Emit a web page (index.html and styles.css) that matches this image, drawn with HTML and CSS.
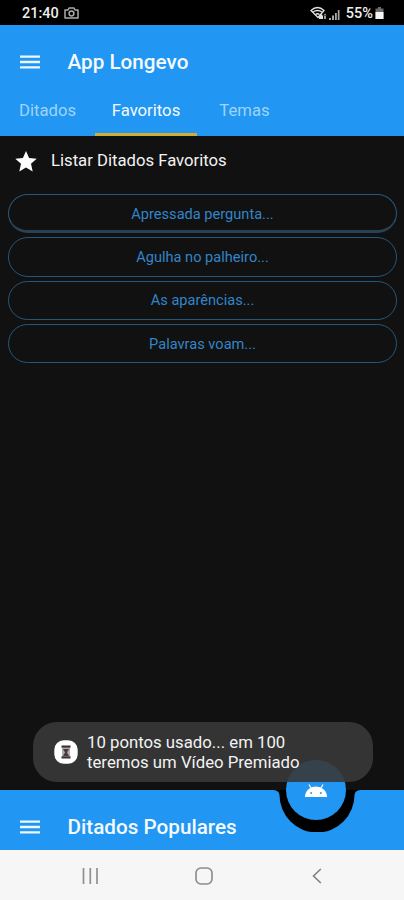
FILE: index.html
```html
<!DOCTYPE html>
<html lang="pt-BR">
<head>
<meta charset="utf-8">
<meta name="viewport" content="width=device-width">
<title>App Longevo</title>
<link rel="stylesheet" href="styles.css">
</head>
<body>
<div class="phone">
  <div class="status">
    <span class="clock">21:40</span>
    <svg class="camera" width="15" height="12" viewBox="0 0 15 12"><path d="M1 3h3l1-2h5l1 2h3v8H1z" fill="none" stroke="#aaa" stroke-width="1.5" stroke-linejoin="round"/><circle cx="7.5" cy="6.5" r="2.4" fill="none" stroke="#aaa" stroke-width="1.5"/></svg>
    <svg class="signal" width="31" height="15" viewBox="0 0 31 15"><g fill="none" stroke="#e2e2e2" stroke-width="1.3"><path d="M1 4.500Q7.500-1.500 14 4.500L8 11.500z"/><path d="M3 6q4.500-3 9 0M5.500 8.500q2-1.500 4 0"/></g><path d="M9 10l2-2.500L13 10v3H9zM13.500 10h3l-1.500-2.500zM14.300 9h1.400v4h-1.400z" fill="#e2e2e2"/><path d="M19 12h2v2h-2zM22 9.500h2V14h-2zM25 7h1.800v7H25zM27.800 4h1.700v10h-1.700z" fill="#a5a5a5"/></svg>
    <span class="percent">55%</span>
    <svg class="battery" width="9" height="12" viewBox="0 0 9 12"><path d="M3 0h3v1.500h2.500V12h-8V1.500H3z" fill="#6b6b6b"/><path d="M.5 5h8v7h-8z" fill="#f5f5f5"/></svg>
  </div>
  <header class="header">
    <div class="title-row">
      <svg class="menu" width="20" height="14" viewBox="0 0 20 14"><path d="M0 1.700h20M0 7h20M0 12.300h20" stroke="#eef8ff" stroke-width="2.300"/></svg>
      <h1 class="title">App Longevo</h1>
    </div>
    <nav class="tabs">
      <a class="tab tab-first">Ditados</a>
      <a class="tab tab-active">Favoritos</a>
      <a class="tab tab-last">Temas</a>
    </nav>
  </header>
  <main class="content">
    <div class="list-head">
      <svg width="22" height="21" viewBox="0 0 22 21"><path d="M11 0l3.100 7.100 7.600.7-5.700 5 1.700 7.600L11 16.400l-6.700 4L6 12.800l-5.700-5 7.600-.7z" fill="#fff"/></svg>
      <h2 class="list-title">Listar Ditados Favoritos</h2>
    </div>
    <div class="list">
      <button class="pill pill-first">Apressada pergunta...</button>
      <button class="pill">Agulha no palheiro...</button>
      <button class="pill">As aparências...</button>
      <button class="pill">Palavras voam...</button>
    </div>
  </main>
  <footer class="bottom">
    <svg class="notch" width="110" height="42" viewBox="0 0 110 42"><path d="M10 0h90c-4 0-7 1-7.500 5a37.500 37.500 0 0 1-75 0C17 1 14 0 10 0z" fill="#000"/></svg>
    <svg class="menu" width="20" height="14" viewBox="0 0 20 14"><path d="M0 1.700h20M0 7h20M0 12.300h20" stroke="#eef8ff" stroke-width="2.300"/></svg>
    <span class="title bottom-title">Ditados Populares</span>
    <div class="fab">
      <svg width="22" height="13" viewBox="0 0 22 13"><path d="M0 13a11 10.500 0 0 1 22 0z" fill="#fff"/><path d="M6.500 5L4 .5M15.500 5L18 .5" stroke="#fff" stroke-width="1.200"/><circle cx="6.200" cy="9" r="1" fill="#2196f3"/><circle cx="15.800" cy="9" r="1" fill="#2196f3"/></svg>
    </div>
  </footer>
  <div class="sysnav">
    <svg width="17" height="16" viewBox="0 0 17 16"><path d="M1.500 0v16M8.300 0v16M15 0v16" stroke="#909090" stroke-width="1.700"/></svg>
    <svg width="18" height="18" viewBox="0 0 18 18"><rect x="1" y="1" width="16" height="16" rx="5" fill="none" stroke="#898989" stroke-width="1.600"/></svg>
    <svg width="10" height="16" viewBox="0 0 10 16"><path d="M8.800 1L1.500 8l7.300 7" fill="none" stroke="#808080" stroke-width="1.600"/></svg>
  </div>
  <div class="toast">
    <svg width="24" height="24" viewBox="0 0 24 24"><rect x=".3" y=".3" width="23.400" height="23.400" rx="9.500" fill="#fff"/><path d="M7.500 5.500h9v2.300h-9zM7.500 16.200h9v2.300h-9z" fill="#333"/><path d="M8 8h8v8H8z" fill="#b4aaa5"/><path d="M9 9h6l-2 3.500 2 3.500H9l2-3.500z" fill="#4a3d39"/></svg>
    <p class="toast-text"><span class="line line-one">10 pontos usado... em 100</span><span class="line">teremos um Vídeo Premiado</span></p>
  </div>
</div>
</body>
</html>
```
FILE: styles.css
```css
* { box-sizing: border-box; }
body {
  margin: 0;
  background: #111;
  font-family: Roboto, "Liberation Sans", sans-serif;
}
.phone {
  position: relative;
  width: 404px;
  height: 900px;
  display: flex;
  flex-direction: column;
  overflow: hidden;
  background: #111;
}
svg { display: block; flex: none; }
.status {
  height: 25px;
  flex: none;
  display: flex;
  align-items: center;
  padding: 1px 20px 0 22px;
  background: #000;
  color: #eee;
  font-size: 14.500px;
  font-weight: 500;
}
.camera { margin-left: 5px; }
.signal { margin-left: auto; }
.percent { margin-left: 5px; font-size: 14.500px; }
.battery { margin-left: 2px; }
.header {
  height: 111px;
  flex: none;
  display: flex;
  flex-direction: column;
  background: #2196f3;
}
.title-row {
  height: 60px;
  display: flex;
  align-items: center;
  padding: 14px 0 0 20px;
}
.title {
  margin: 0 0 0 27.500px;
  font-size: 20.700px;
  line-height: 24px;
  font-weight: 500;
  color: #f4faff;
  white-space: nowrap;
}
.tabs {
  flex: 1;
  display: flex;
}
.tab {
  display: flex;
  justify-content: center;
  padding-top: 16px;
  font-size: 16.700px;
  line-height: 20px;
  color: #9fd4fb;
}
.tab-first { width: 95px; }
.tab-active {
  width: 102px;
  color: #f4faff;
  border-bottom: 3px solid #d1ad35;
}
.tab-last { width: 95px; }
.content { flex: 1; }
.list-head {
  height: 50px;
  display: flex;
  align-items: center;
  gap: 14px;
  padding-left: 15px;
}
.list-title {
  margin: 0;
  font-size: 16.700px;
  line-height: 20px;
  font-weight: 400;
  color: #f3f3f3;
}
.list {
  display: flex;
  flex-direction: column;
  gap: 4px;
  padding: 8px 7px 0 8px;
}
.pill {
  height: 39.300px;
  padding: 0;
  border: 1.500px solid #285679;
  border-radius: 20px;
  background: none;
  font: 14.600px/18px Roboto, "Liberation Sans", sans-serif;
  color: #3185c9;
}
.pill-first {
  padding-top: 2px;
  border-bottom: 3px solid #284154;
}
.bottom {
  position: relative;
  height: 60px;
  flex: none;
  display: flex;
  align-items: center;
  padding: 14px 0 0 20px;
  background: #2196f3;
}
.notch {
  position: absolute;
  left: 262px;
  top: 0;
}
.fab {
  position: absolute;
  left: 286px;
  top: -30px;
  width: 60px;
  height: 60px;
  border-radius: 50%;
  background: #2196f3;
  display: flex;
  justify-content: center;
  padding-top: 24px;
}
.sysnav {
  height: 50px;
  flex: none;
  display: flex;
  align-items: center;
  gap: 96px;
  padding: 2px 0 0 82px;
  background: #f6f6f6;
}
.sysnav svg:last-child { margin-left: 3px; }
.toast {
  position: absolute;
  left: 33px;
  top: 722px;
  width: 340px;
  height: 60px;
  display: flex;
  align-items: center;
  gap: 9px;
  padding: 0 0 0 21px;
  border-radius: 24px;
  background: rgba(56, 56, 56, 0.900);
}
.toast-text {
  margin: 0;
  font-size: 16.750px;
  line-height: 20px;
  color: #f3f3f3;
}
.line { display: block; white-space: nowrap; }
```
